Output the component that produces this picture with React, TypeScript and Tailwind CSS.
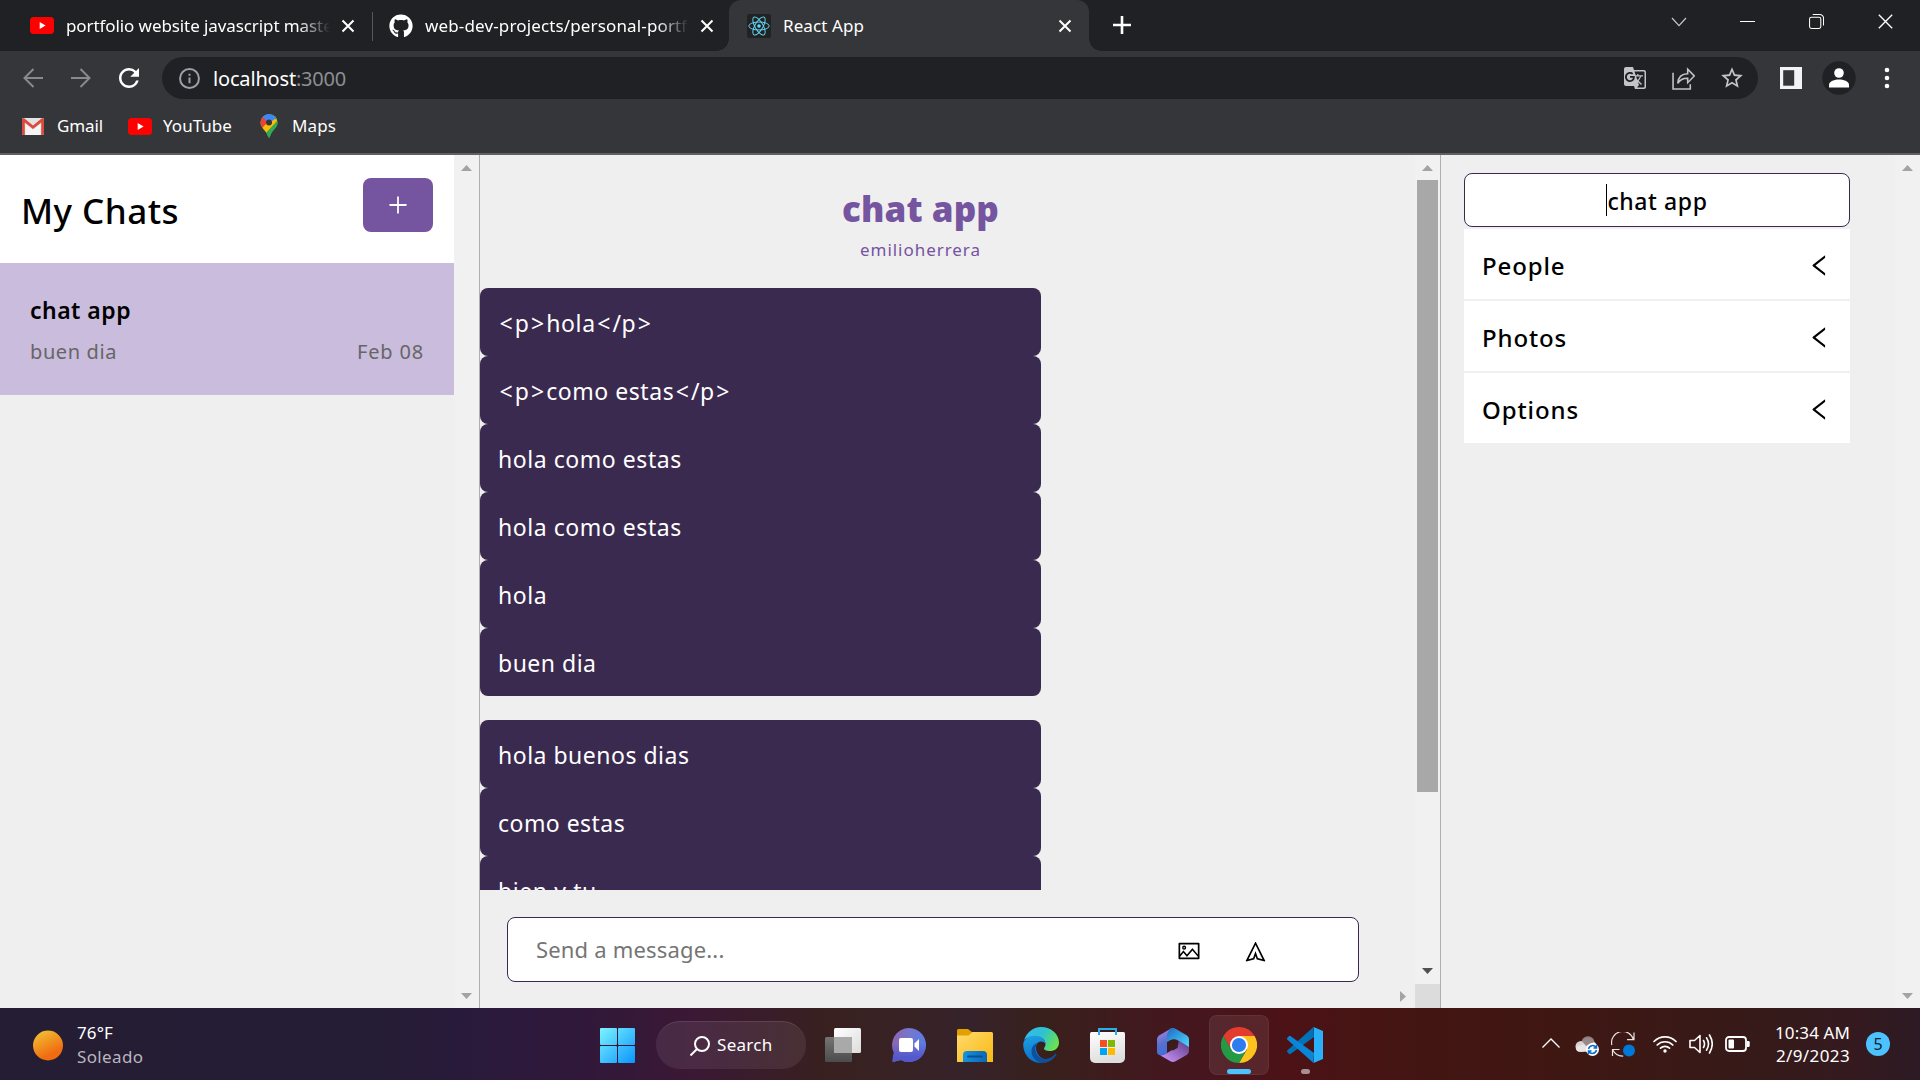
import React from "react";
import { FaGithub } from "react-icons/fa";
import { MdGTranslate, MdRefresh, MdStarBorder } from "react-icons/md";
import { AiOutlineLeft, AiOutlinePicture, AiOutlinePlus, AiOutlineSend } from "react-icons/ai";

function YouTube({ className }: { className: string }) {
  return (
    <svg viewBox="0 0 24 16" preserveAspectRatio="none" className={className}>
      <rect width="24" height="16" rx="3.5" fill="#f00" />
      <path d="M9.7 4.6v6.8L15.6 8z" fill="#fff" />
    </svg>
  );
}

function ReactLogo() {
  return (
    <svg viewBox="0 0 24 24" className="size-6 shrink-0">
      <rect width="24" height="24" rx="2.5" fill="#222" />
      <circle cx="12" cy="12" r="1.8" fill="#61dafb" />
      <g fill="none" stroke="#61dafb" strokeWidth="0.95">
        <ellipse cx="12" cy="12" rx="10.2" ry="4" />
        <ellipse cx="12" cy="12" rx="10.2" ry="4" transform="rotate(60 12 12)" />
        <ellipse cx="12" cy="12" rx="10.2" ry="4" transform="rotate(120 12 12)" />
      </g>
    </svg>
  );
}

function Cross({ className, stroke = 2 }: { className: string; stroke?: number }) {
  return (
    <svg viewBox="0 0 14 14" className={className} fill="none" stroke="#fff" strokeWidth={stroke}>
      <path d="M1.5 1.5l11 11M12.5 1.5l-11 11" />
    </svg>
  );
}

function TabStrip() {
  return (
    <div className="flex h-[51px] items-start bg-[#202124]">
      <div className="flex h-[51px] w-[372px] items-center pl-[30px]">
        <YouTube className="h-[17px] w-6 shrink-0" />
        <div className="ml-3 w-[264px] overflow-hidden whitespace-nowrap text-[17px] tracking-[-0.09px] text-white [mask-image:linear-gradient(to_right,#000_88%,transparent)]">
          portfolio website javascript maste
        </div>
        <Cross className="ml-[11px] size-[14px] shrink-0" />
      </div>
      <div className="mt-3 h-[29px] w-px bg-[#55575b]" />
      <div className="flex h-[51px] w-[356px] items-center rounded-br-[12px] pl-4">
        <FaGithub className="size-6 shrink-0 text-white" />
        <div className="ml-3 w-[264px] overflow-hidden whitespace-nowrap text-[17px] tracking-[0.14px] text-white [mask-image:linear-gradient(to_right,#000_88%,transparent)]">
          web-dev-projects/personal-portfo
        </div>
        <Cross className="ml-[11px] size-[14px] shrink-0" />
      </div>
      <div className="relative flex h-[51px] w-[360px] items-center rounded-t-[12px] bg-[#35363a] pl-[18px]">
        <div className="absolute bottom-0 -left-3 size-3 bg-[radial-gradient(circle_at_0_0,transparent_11.5px,#35363a_12px)]" />
        <div className="absolute bottom-0 -right-3 size-3 bg-[radial-gradient(circle_at_100%_0,transparent_11.5px,#35363a_12px)]" />
        <ReactLogo />
        <span className="ml-3 w-[275px] text-[17px] tracking-[0.09px] text-white">React App</span>
        <Cross className="size-[14px]" />
      </div>
      <svg viewBox="0 0 18 18" className="mt-4 ml-6 size-[18px]" stroke="#fff" strokeWidth="2.6">
        <path d="M9 0v18M0 9h18" />
      </svg>
      <div className="ml-auto flex h-[43px] items-center pr-[26px]">
        <svg viewBox="0 0 16 10" className="mr-[53px] h-[10px] w-4" fill="none" stroke="#c8c8c8" strokeWidth="1.2">
          <path d="M1 1l7 7.6L15 1" />
        </svg>
        <div className="mr-[54px] h-px w-[15px] bg-white" />
        <svg viewBox="0 0 16 16" className="mr-[53px] size-[15px]" fill="none" stroke="#fff" strokeWidth="1.1">
          <rect x="0.6" y="3.4" width="12" height="12" rx="2" />
          <path d="M4 .6h7.5a4 4 0 0 1 4 4v7.6" />
        </svg>
        <Cross className="size-[17px]" stroke={1.1} />
      </div>
    </div>
  );
}

function Toolbar() {
  return (
    <div className="flex h-[54px] items-center bg-[#35363a] pl-[23px]">
      <svg viewBox="0 0 20 20" className="size-5" fill="none" stroke="#898a8d" strokeWidth="2">
        <path d="M20 10H2M10.5 1l-9 9 9 9" />
      </svg>
      <svg viewBox="0 0 20 20" className="ml-7 size-5" fill="none" stroke="#898a8d" strokeWidth="2">
        <path d="M0 10h18M9.500 1l9 9-9 9" />
      </svg>
      <MdRefresh className="mr-px ml-[23px] size-[30px] text-white" />
      <div className="ml-[17px] flex h-[42px] w-[1596px] items-center rounded-full bg-[#202124] pl-[17px]">
        <svg viewBox="0 0 20 20" className="size-[21px]" fill="none" stroke="#9aa0a6" strokeWidth="1.9">
          <circle cx="10" cy="10" r="9" />
          <path d="M10 9v5.500M10 5.400v2" />
        </svg>
        <span className="ml-[13px] pt-px text-[20px] tracking-[-0.17px] text-white">localhost</span>
        <span className="pt-px text-[20px] tracking-[-0.23px] text-[#8c8f93]">:3000</span>
        <div className="ml-auto flex items-center pr-[13px]">
          <MdGTranslate className="mr-[25px] size-6 text-[#c3c4c6]" />
          <svg viewBox="0 0 22 22" className="mr-[24px] size-[23px]" fill="none" stroke="#c3c4c6" strokeWidth="1.5">
            <path d="M1 5.500V21h16.500v-4.500" />
            <path d="M5.500 15.500c.5-6 4-9 9.500-9V2l6.300 6.600L15 15v-4.300c-4-.2-7 1-9.500 4.800z" />
          </svg>
          <MdStarBorder className="size-[26px] text-[#c3c4c6]" />
        </div>
      </div>
      <svg viewBox="0 0 22 22" className="ml-[22px] size-[22px]">
        <rect width="22" height="22" fill="#f1f3f4" />
        <rect x="3.200" y="3.200" width="11" height="15.500" fill="#35363a" />
      </svg>
      <svg viewBox="0 0 34 34" className="ml-[20px] size-[34px]">
        <circle cx="17" cy="17" r="16.700" fill="#202124" />
        <circle cx="17" cy="12" r="4.800" fill="#fff" />
        <path d="M7 26.500v-2.500c0-4 6-5.500 10-5.500s10 1.500 10 5.500v2.500z" fill="#fff" />
      </svg>
      <svg viewBox="0 0 6 22" className="ml-[28px] h-[22px] w-[6px]" fill="#fff">
        <circle cx="3" cy="3" r="2.300" />
        <circle cx="3" cy="11" r="2.300" />
        <circle cx="3" cy="19" r="2.300" />
      </svg>
    </div>
  );
}

function Bookmarks() {
  return (
    <div className="flex h-12 items-center bg-[#35363a] pb-[6px] pl-[22px] text-[17px] text-white">
      <svg viewBox="0 0 22 17" className="h-[17px] w-[22px]">
        <rect width="22" height="17" rx="1.500" fill="#e3e3e3" />
        <path d="M3.500 17V6l7.500 6 7.500-6v11z" fill="#f5f5f5" />
        <path d="M0 1.500v14A1.500 1.500 0 0 0 1.500 17H2.800V4.500L11 11l8.200-6.500V17h1.300a1.500 1.500 0 0 0 1.500-1.500v-14C22 .5 20.500-.3 19.500.6L11 7.600 2.500.6C1.500-.3 0 .5 0 1.500z" fill="#dc4a3e" />
      </svg>
      <span className="ml-[13px] w-[46px] tracking-[-0.12px]">Gmail</span>
      <YouTube className="ml-[25px] h-[17px] w-6" />
      <span className="ml-[11px] w-[69px] tracking-[0.04px]">YouTube</span>
      <svg viewBox="0 0 18 24" className="ml-7 h-6 w-[18px]">
        <defs>
          <clipPath id="pin">
            <path d="M9 0a8.600 8.600 0 0 1 8.600 8.600c0 5.600-6 7.600-7.800 14.500-.2 1.200-1.400 1.200-1.600 0C6.400 16.200.4 14.200.4 8.600A8.600 8.600 0 0 1 9 0z" />
          </clipPath>
        </defs>
        <g clipPath="url(#pin)">
          <rect width="18" height="24" fill="#34a853" />
          <path d="M-1 3.500L3 2.500 9 8 2 15-1 12z" fill="#ea4335" />
          <path d="M0 16.500L14 1h4v5L5 20z" fill="#fbbc04" />
          <path d="M11 4l4-3 4 5-8 8-7 8 14 2V6z" fill="#34a853" />
          <path d="M2.500 2.500L5 0h9l3 3-8.500 7z" fill="#4285f4" />
        </g>
        <circle cx="9" cy="8.600" r="3" fill="#35363a" />
      </svg>
      <span className="ml-[14px] tracking-[0.11px]">Maps</span>
    </div>
  );
}

type Dir = "up" | "down" | "right";
function Arrow({ dir, dark = false }: { dir: Dir; dark?: boolean }) {
  const d = { up: "M0 6L5.500 0 11 6z", down: "M0 0L5.500 6 11 0z", right: "M0 0L6 5.500 0 11z" }[dir];
  return (
    <svg
      viewBox={dir === "right" ? "0 0 6 11" : "0 0 11 6"}
      className={dir === "right" ? "h-[11px] w-[6px]" : "h-[6px] w-[11px]"}
      fill={dark ? "#505050" : "#a3a3a3"}
    >
      <path d={d} />
    </svg>
  );
}

function Gutter() {
  return (
    <div className="flex w-[25px] shrink-0 flex-col items-center justify-between bg-[#f1f1f1] pt-[10px] pb-[9px]">
      <Arrow dir="up" />
      <Arrow dir="down" />
    </div>
  );
}

function ChatList() {
  return (
    <aside className="flex w-[479px]">
      <div className="flex-1">
        <div className="flex h-[108px] items-start justify-between bg-white pt-[23px] pr-[21px] pl-[21px]">
          <h1 className="pt-[9px] text-[35px] leading-[48px] font-medium tracking-[0.46px] text-black">My Chats</h1>
          <button className="flex h-[54px] w-[70px] items-center justify-center rounded-lg bg-[#7554a0] text-white">
            <AiOutlinePlus className="size-6" />
          </button>
        </div>
        <div className="flex h-[132px] flex-col bg-[#cabcdc] px-[30px] pt-[31px]">
          <div className="text-[23px] leading-8 font-semibold tracking-[0.47px] text-black">chat app</div>
          <div className="mt-[12px] flex justify-between text-[20px] leading-7 text-[#666]">
            <span className="tracking-[0.6px]">buen dia</span>
            <span className="tracking-[0.83px]">Feb 08</span>
          </div>
        </div>
      </div>
      <Gutter />
    </aside>
  );
}

const firstGroup = [
  { text: "<p>hola</p>", track: "tracking-[0.6px]" },
  { text: "<p>como estas</p>", track: "tracking-[0.55px]" },
  { text: "hola como estas", track: "tracking-[0.55px]" },
  { text: "hola como estas", track: "tracking-[0.55px]" },
  { text: "hola", track: "tracking-[0.6px]" },
  { text: "buen dia", track: "tracking-[0.5px]" },
];
const secondGroup = [
  { text: "hola buenos dias", track: "tracking-[0.5px]" },
  { text: "como estas", track: "tracking-[0.46px]" },
  { text: "bien y tu", track: "tracking-[0.6px]" },
];

function Message({ text }: { text: string }) {
  return (
    <>
      {text.split(/([<>])/).map((part, i) =>
        part === "<" || part === ">" ? (
          <span key={i} className="px-[1.5px]">{part}</span>
        ) : (
          part
        ),
      )}
    </>
  );
}

function Group({ items }: { items: { text: string; track: string }[] }) {
  return (
    <div className="w-[561px]">
      {items.map((m, i) => (
        <div key={i} className="flex h-[68px] items-center rounded-lg bg-[#3b2a4f] pt-px pl-[18px]">
          <span className={"text-[23px] leading-8 text-white " + m.track}>
            <Message text={m.text} />
          </span>
        </div>
      ))}
    </div>
  );
}

function ChatFeed() {
  return (
    <main className="flex w-[961px] border-l border-[#afafaf]">
      <div className="flex flex-1 flex-col">
        <div className="h-[735px] overflow-hidden">
          <div className="flex h-[133px] flex-col items-center pt-[29px] pr-[54px]">
            <h2 className="text-[35px] leading-[50px] font-black tracking-[0.1px] text-[#7554a0]">chat app</h2>
            <div className="mt-1 text-[17px] leading-6 font-normal tracking-[0.95px] text-[#7554a0]">emilioherrera</div>
          </div>
          <Group items={firstGroup} />
          <div className="h-6" />
          <Group items={secondGroup} />
        </div>
        <div className="mt-[27px] ml-[27px] flex h-[65px] w-[852px] items-center rounded-lg border border-[#3b2a4f] bg-white pl-7">
          <span className="w-[641px] text-[22px] tracking-[0.18px] text-[#757575]">Send a message...</span>
          <AiOutlinePicture className="mt-[2px] size-6 text-black" />
          <AiOutlineSend className="mt-[3px] ml-[43px] size-[23px] -rotate-90 text-black" />
        </div>
        <div className="mt-[9px] ml-auto mr-[9px]">
          <Arrow dir="right" />
        </div>
      </div>
      <div className="flex w-[25px] flex-col">
        <div className="flex h-[829px] flex-col items-center bg-[#f1f1f1] pt-[10px] pb-[10px]">
          <Arrow dir="up" />
          <div className="mt-[9px] h-[612px] w-[21px] shrink-0 bg-[#a8a8a8]" />
          <div className="mt-auto flex">
            <Arrow dir="down" dark />
          </div>
        </div>
        <div className="flex-1 bg-[#dcdcdc]" />
      </div>
    </main>
  );
}

const panels = [
  { name: "People", track: "tracking-[0.86px]" },
  { name: "Photos", track: "tracking-[0.85px]" },
  { name: "Options", track: "tracking-[0.89px]" },
];

function Settings() {
  return (
    <aside className="flex w-[480px] border-l border-[#afafaf]">
      <div className="flex flex-1 flex-col pt-[18px] pl-[23px]">
        <div className="flex h-[54px] w-[386px] items-center justify-center rounded-lg border border-[#3b2a4f] bg-white">
          <div className="h-8 w-px bg-black" />
          <span className="pt-[2px] text-[23px] leading-8 font-medium tracking-[0.6px] text-black">chat app</span>
        </div>
        <div className="mt-[2px] flex w-[386px] flex-col gap-[2px]">
          {panels.map((p) => (
            <div key={p.name} className="flex h-[70px] items-center justify-between bg-white pt-[3px] pr-[17px] pl-[18px]">
              <span className={"text-[24px] leading-8 font-medium text-black " + p.track}>{p.name}</span>
              <AiOutlineLeft className="size-[27px] text-black" />
            </div>
          ))}
        </div>
      </div>
      <Gutter />
    </aside>
  );
}

function StartIcon() {
  return (
    <svg viewBox="0 0 35 35" className="size-[35px]">
      <defs>
        <linearGradient id="win" x1="0" y1="0" x2="1" y2="1" gradientUnits="objectBoundingBox">
          <stop offset="0" stopColor="#7cf3ff" />
          <stop offset="1" stopColor="#0a94ff" />
        </linearGradient>
        <mask id="panes">
          <rect width="17" height="17" rx="1" fill="#fff" />
          <rect x="18" width="17" height="17" rx="1" fill="#fff" />
          <rect y="18" width="17" height="17" rx="1" fill="#fff" />
          <rect x="18" y="18" width="17" height="17" rx="1" fill="#fff" />
        </mask>
      </defs>
      <rect width="35" height="35" fill="url(#win)" mask="url(#panes)" />
    </svg>
  );
}

function TaskView() {
  return (
    <svg viewBox="0 0 36 34" className="h-[34px] w-9">
      <defs>
        <linearGradient id="tvw" x1="0" y1="0" x2="1" y2="1">
          <stop offset="0" stopColor="#fff" />
          <stop offset="1" stopColor="#dcdcdc" />
        </linearGradient>
        <linearGradient id="tvg" x1="0" y1="0" x2="0" y2="1">
          <stop offset="0" stopColor="#747474" />
          <stop offset="1" stopColor="#4c4c4c" />
        </linearGradient>
      </defs>
      <rect y="9" width="27" height="25" rx="1.500" fill="url(#tvg)" />
      <rect x="9" width="27" height="25" rx="1.500" fill="url(#tvw)" />
      <rect x="9" y="9" width="18" height="16" fill="#a9a9a9" />
    </svg>
  );
}

function ChatIcon() {
  return (
    <svg viewBox="0 0 34 34" className="size-[34px]">
      <defs>
        <linearGradient id="teams" x1="0.100" y1="0.400" x2="0.900" y2="0.500">
          <stop offset="0" stopColor="#8a68b4" />
          <stop offset="0.500" stopColor="#7377cf" />
          <stop offset="1" stopColor="#5f7be0" />
        </linearGradient>
        <linearGradient id="teamsb" x1="0" y1="0" x2="0" y2="1">
          <stop offset="0.450" stopColor="#5558cc" stopOpacity="0" />
          <stop offset="0.850" stopColor="#5558cc" />
        </linearGradient>
      </defs>
      <path d="M17 0a17 17 0 1 1-8 32L.6 34 1 28l1-3A17 17 0 0 1 17 0z" fill="url(#teams)" />
      <path d="M17 0a17 17 0 1 1-8 32L.6 34 1 28l1-3A17 17 0 0 1 17 0z" fill="url(#teamsb)" />
      <rect x="7" y="10" width="14" height="14" rx="2" fill="#fff" />
      <path d="M22.500 15.500L27 11v12l-4.500-4.500z" fill="#fff" />
    </svg>
  );
}

function FolderIcon() {
  return (
    <svg viewBox="0 0 36 33" className="h-[33px] w-9">
      <defs>
        <linearGradient id="fold" x1="0" y1="0" x2="1" y2="1">
          <stop offset="0" stopColor="#ffdb6e" />
          <stop offset="1" stopColor="#f9b80f" />
        </linearGradient>
        <linearGradient id="fblue" x1="0" y1="0" x2="1" y2="0">
          <stop offset="0" stopColor="#1593e0" />
          <stop offset="1" stopColor="#0c66b4" />
        </linearGradient>
      </defs>
      <path d="M0 1.500A1.500 1.500 0 0 1 1.500 0h9.500l4.500 3.500H34.500V10H0z" fill="#e2a000" />
      <path d="M0 6.500h11.500l4-3.500h19A1.500 1.500 0 0 1 36 4.500V33H0z" fill="url(#fold)" />
      <path d="M6 33v-7a4 4 0 0 1 4-4h16a4 4 0 0 1 4 4v7z" fill="url(#fblue)" />
      <path d="M11 27.500h14" stroke="#0a4f94" strokeWidth="2" strokeLinecap="round" />
    </svg>
  );
}

function EdgeIcon() {
  return (
    <svg viewBox="0 0 36 36" className="size-9">
      <defs>
        <linearGradient id="e1" x1="0" y1="0.200" x2="1" y2="0.600">
          <stop offset="0" stopColor="#35b9f1" />
          <stop offset="0.500" stopColor="#2dc3cf" />
          <stop offset="1" stopColor="#6be34c" />
        </linearGradient>
        <linearGradient id="e2" x1="0.300" y1="0" x2="0.500" y2="1">
          <stop offset="0" stopColor="#1c9fe3" />
          <stop offset="1" stopColor="#0a6dc6" />
        </linearGradient>
      </defs>
      <path d="M1 13.500A18 18 0 0 1 18 0c10.500 0 18 7.500 18 15.500 0 6-4.500 8.500-9.500 8.500-3.500 0-5.500-1.200-5.500-2.500 0-1 1.500-1.800 1.500-4.500 0-4-4-7.500-9.500-7.500C7 9.500 2.500 11 1 13.500z" fill="url(#e1)" />
      <path d="M.2 18C0 12 6 8.700 12 8.700c6 0 10.500 3.800 10.500 8.300-1-2-3-2.600-4.500-2.600-3.500 0-5 3-5 6.600 0 7 6 12 13 11.500A18 18 0 0 1 18 36C8.500 36 .8 29 .2 18z" fill="url(#e2)" />
      <path d="M14.500 16c-3 3-3 10.500 2 14 5.500 4 12.500 1 15.500-3 1-1 1.800.2 1 1.500C30.500 32.500 25.500 36 19 36c-6.500-1-11-7-10.500-12.500.4-4 3-6.800 6-7.500z" fill="#104f9b" />
    </svg>
  );
}

function StoreIcon() {
  return (
    <svg viewBox="0 0 35 35" className="size-[35px]">
      <defs>
        <linearGradient id="bag" x1="0" y1="0" x2="0.300" y2="1">
          <stop offset="0" stopColor="#fff" />
          <stop offset="1" stopColor="#dedede" />
        </linearGradient>
      </defs>
      <path d="M0 5.500Q0 4 1.500 4h32Q35 4 35 5.500V30a5 5 0 0 1-5 5H5a5 5 0 0 1-5-5z" fill="url(#bag)" />
      <path d="M9 7V1h17v6" fill="none" stroke="#27b0ea" strokeWidth="2" />
      <rect x="10" y="12" width="7" height="7" fill="#f25022" />
      <rect x="18" y="12" width="7" height="7" fill="#7fba00" />
      <rect x="10" y="20" width="7" height="7" fill="#00a4ef" />
      <rect x="18" y="20" width="7" height="7" fill="#ffb900" />
    </svg>
  );
}

function OfficeIcon() {
  return (
    <svg viewBox="0 0 32 34" className="h-[34px] w-8">
      <defs>
        <linearGradient id="o1" x1="0" y1="0" x2="0.300" y2="1">
          <stop offset="0" stopColor="#b48ae6" />
          <stop offset="0.600" stopColor="#5a6fd0" />
          <stop offset="1" stopColor="#3c6fdc" />
        </linearGradient>
        <linearGradient id="o2" x1="0" y1="0" x2="1" y2="1">
          <stop offset="0" stopColor="#1f6ac4" />
          <stop offset="1" stopColor="#4fdcff" />
        </linearGradient>
        <linearGradient id="o3" x1="1" y1="0" x2="0" y2="1">
          <stop offset="0" stopColor="#5a3a86" />
          <stop offset="1" stopColor="#d49bff" />
        </linearGradient>
      </defs>
      <path d="M14 .5L2 7.500Q0 9 0 11v13q0 2.500 3 3.300 3 .5 7-2.300V11Q10 4 16 0z" fill="url(#o1)" />
      <path d="M13 1q3-2 6 0l11 6.500q2 1.500 2 3.500v9L21 12.500Q16 9.500 10 14V9q0-5 3-8z" fill="url(#o2)" />
      <path d="M32 19v4q0 2.500-2 3.700L19 33q-3 2-6 0L3 27.300q3 .5 7-2.300l9.500-5.500Q22 17.500 21.500 12.500z" fill="url(#o3)" />
      <path d="M16 11.500l4.700 2.800v5.400L16 22.500l-4.700-2.800v-5.400z" fill="#3b1d20" />
    </svg>
  );
}

function ChromeIcon() {
  return (
    <svg viewBox="0 0 36 36" className="size-9">
      <path d="M18 9h15.600A18 18 0 0 1 18 36l7.800-13.500z" fill="#fcc31e" />
      <path d="M18 9h15.600A18 18 0 0 0 2.400 9l7.800 13.500z" fill="#e33b2e" />
      <path d="M2.400 9A18 18 0 0 0 18 36l7.800-13.500H10.200z" fill="#249a47" />
      <circle cx="18" cy="18" r="9" fill="#fff" />
      <circle cx="18" cy="18" r="7.100" fill="#2f7cf0" />
    </svg>
  );
}

function CodeIcon() {
  return (
    <svg viewBox="0 0 36 36" className="size-9">
      <path d="M26.500 0L27 10 3.800 26.800q-1 .7-2 0L.5 25.300q-1-1 0-2z" fill="#0072b8" />
      <path d="M26.500 36L27 26 3.800 9.200q-1-.7-2 0L.5 10.700q-1 1 0 2z" fill="#0a86d8" />
      <path d="M26.500 0L36 4v28l-9.500 4q.5-1 .5-3V3q0-2-.5-3z" fill="#29b0f8" />
    </svg>
  );
}

function Cell({ children }: { children: React.ReactNode }) {
  return <div className="flex h-full w-[66px] shrink-0 items-center justify-center">{children}</div>;
}

function Taskbar() {
  return (
    <footer className="flex h-[72px] items-center bg-[linear-gradient(to_right,#241d33_0px,#251c35_380px,#2a1a3c_480px,#30183a_580px,#3b1835_690px,#38211f_830px,#36222a_970px,#38201c_1040px,#45161f_1190px,#4c1216_1290px,#441512_1400px,#3f1712_1560px,#361a19_1750px,#341a20_1860px,#2c1a24_1920px)] pt-[2px] text-white">
      <svg viewBox="0 0 30 31" className="ml-[33px] h-[31px] w-[30px]">
        <defs>
          <linearGradient id="sun" x1="0.200" y1="0" x2="0.700" y2="1">
            <stop offset="0" stopColor="#f2c035" />
            <stop offset="0.800" stopColor="#f06c10" />
          </linearGradient>
        </defs>
        <circle cx="15" cy="15.500" r="15" fill="url(#sun)" />
      </svg>
      <div className="ml-[14px] w-[507px] text-[17px] leading-6">
        <div className="tracking-[0.11px]">76°F</div>
        <div className="tracking-[0.35px] text-[#b9b6bf]">Soleado</div>
      </div>
      <Cell>
        <StartIcon />
      </Cell>
      <div className="ml-[6px] flex h-12 w-[150px] items-center rounded-full border-t border-white/10 bg-white/8 pl-[34px]">
        <svg viewBox="0 0 20 20" className="size-5" fill="none" stroke="#fff" strokeWidth="2">
          <circle cx="12" cy="8" r="7" />
          <path d="M7 13l-6.500 6.500" />
        </svg>
        <span className="ml-[7px] pb-px text-[17px] tracking-[0.3px]">Search</span>
      </div>
      <div className="ml-1 flex h-full items-center">
        <Cell><TaskView /></Cell>
        <Cell><ChatIcon /></Cell>
        <Cell><FolderIcon /></Cell>
        <Cell><EdgeIcon /></Cell>
        <Cell><StoreIcon /></Cell>
        <Cell><OfficeIcon /></Cell>
        <Cell>
          <div className="relative flex size-[60px] items-center justify-center rounded-lg border border-white/6 bg-white/8">
            <ChromeIcon />
            <div className="absolute bottom-0 h-[5px] w-6 rounded-full bg-[#4cc2ff]" />
          </div>
        </Cell>
        <Cell>
          <div className="relative flex size-[60px] items-center justify-center">
            <CodeIcon />
            <div className="absolute bottom-[1px] h-[5px] w-[9px] rounded-full bg-[#a58f92]" />
          </div>
        </Cell>
      </div>
      <div className="ml-auto flex items-center pr-[30px]">
        <svg viewBox="0 0 18 10" className="mr-[15px] mb-1 h-[10px] w-[18px]" fill="none" stroke="#fff" strokeWidth="1.300">
          <path d="M.5 9.500L9 1l8.500 8.500" />
        </svg>
        <svg viewBox="0 0 24 20" className="mt-[2px] mr-3 h-5 w-6">
          <circle cx="13" cy="7" r="6.700" fill="#8f8280" />
          <circle cx="6" cy="10.500" r="5.500" fill="#d8d2d1" />
          <path d="M3 15.500q-3-2-1.500-5L16 6q4-1 5.500 3v5l-4 2z" fill="#e8e5e4" />
          <path d="M7 5a7 7 0 0 1 12 1l-8 4z" fill="#968988" />
          <circle cx="17.500" cy="13.500" r="6.500" fill="#fff" />
          <g fill="none" stroke="#0a6ccc" strokeWidth="1.500">
            <path d="M13.500 13a4.200 4.200 0 0 1 7.600-1.500M21.500 9v3h-3M21.500 14a4.200 4.200 0 0 1-7.600 1.500M13.500 18v-3h3" />
          </g>
        </svg>
        <svg viewBox="0 0 25 25" className="mr-[17px] mb-[2px] size-[25px]" fill="none" stroke="#e8e4e4" strokeWidth="1.200">
          <path d="M.8 13A11.200 11.200 0 0 1 22.500 7.500M23 .5v7.200h-7M1.500 24v-6.500h7M1.800 18a11 11 0 0 0 10.500 6" />
          <circle cx="18" cy="18.500" r="6" fill="#0078d7" stroke="none" />
        </svg>
        <svg viewBox="0 0 24 18" className="mr-3 mb-[2px] h-[18px] w-6" fill="none" stroke="#fff" strokeWidth="1.700" strokeLinecap="round">
          <path d="M1 6.500a15.500 15.500 0 0 1 22 0M4.200 10a11 11 0 0 1 15.600 0M7.500 13.200a6.400 6.400 0 0 1 9 0" />
          <circle cx="12" cy="16" r="1.700" fill="#fff" stroke="none" />
        </svg>
        <svg viewBox="0 0 24 20" className="mr-3 mb-[2px] h-5 w-6" fill="none" stroke="#fff" strokeWidth="1.600" strokeLinejoin="round" strokeLinecap="round">
          <path d="M1 6.500h4.500l5.500-5v17l-5.500-5H1z" />
          <path d="M14.500 6.500q2 3.500 0 7M17.500 3.800q4 6.200 0 12.400M20.500 1q5.500 9 0 18" />
        </svg>
        <svg viewBox="0 0 25 16" className="mr-[25px] mb-[2px] h-4 w-[25px]">
          <rect x="1" y="1" width="20" height="14" rx="3" fill="none" stroke="#fff" strokeWidth="1.800" />
          <rect x="3.500" y="3.500" width="5.500" height="9" rx="1" fill="#fff" />
          <path d="M22 5h1.500q1.200 0 1.200 1.200v3.600q0 1.200-1.200 1.200H22z" fill="#fff" />
        </svg>
        <div className="w-[75px] pb-[2px] text-right text-[17px] leading-[23px]">
          <div className="tracking-[0.11px] whitespace-nowrap">10:34 AM</div>
          <div className="tracking-[0.38px]">2/9/2023</div>
        </div>
        <div className="mb-[2px] ml-4 flex size-6 items-center justify-center rounded-full bg-[#4cc2ff] text-[16px] text-[#10222e]">5</div>
      </div>
    </footer>
  );
}

export default function App() {
  return (
    <div className="flex h-[1080px] w-[1920px] flex-col overflow-hidden bg-[#efefef] font-['Noto_Sans','Open_Sans',sans-serif]">
      <TabStrip />
      <Toolbar />
      <Bookmarks />
      <div className="h-[2px] bg-[#5f6064]" />
      <div className="flex h-[853px]">
        <ChatList />
        <ChatFeed />
        <Settings />
      </div>
      <Taskbar />
    </div>
  );
}
